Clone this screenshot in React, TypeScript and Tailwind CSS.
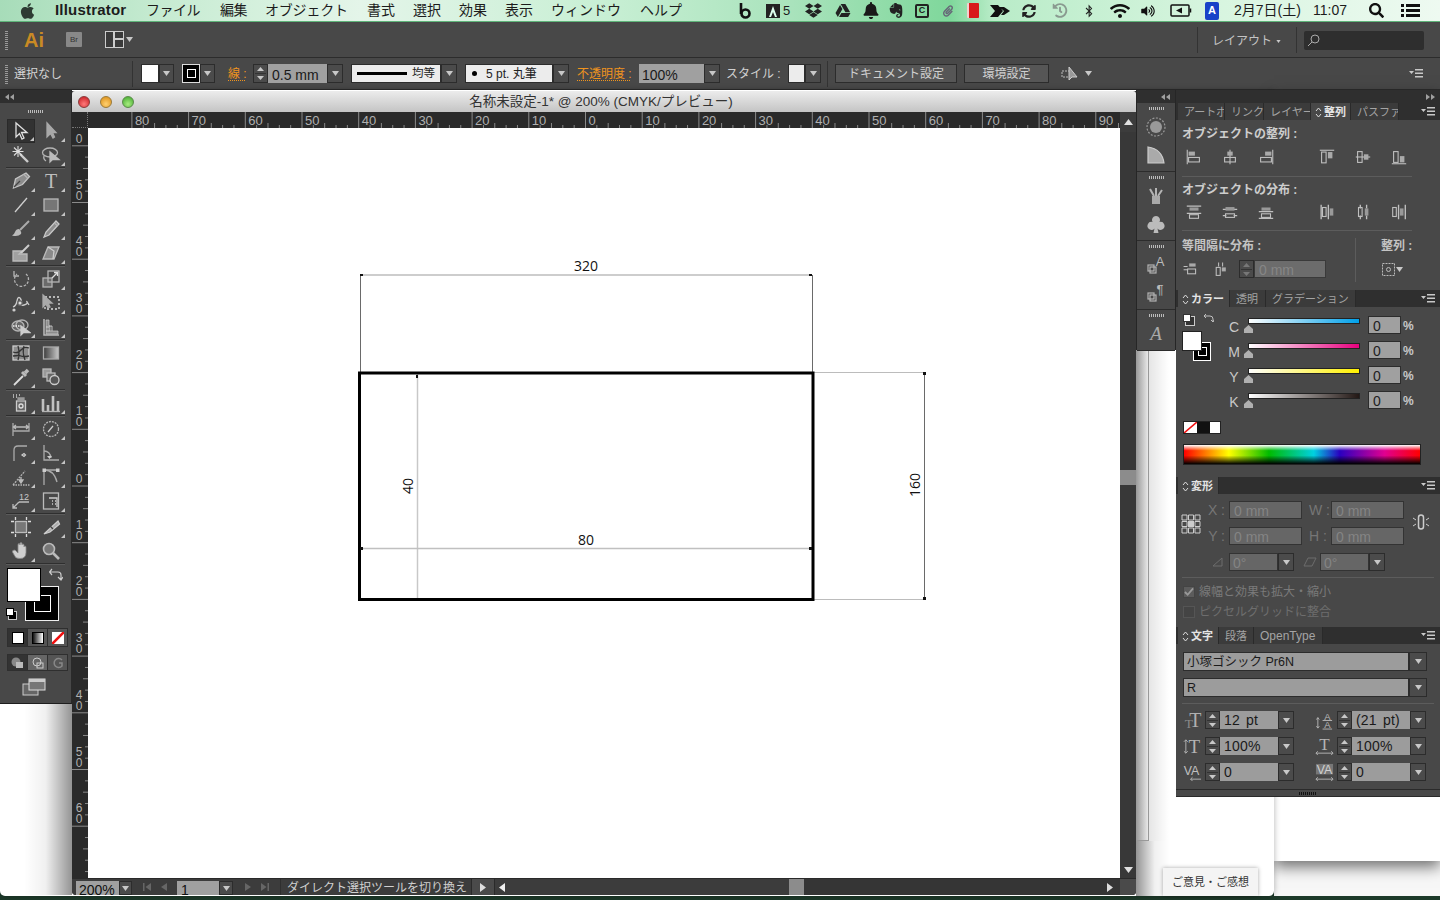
import React from "react";
import { FaApple, FaDropbox, FaGoogleDrive, FaBell, FaEvernote, FaPaperclip, FaSyncAlt, FaBluetoothB, FaWifi, FaVolumeUp, FaSearch, FaHistory } from "react-icons/fa";

const Tri = ({ c = "#c8c8c8", w = 7, h = 5 }: { c?: string; w?: number; h?: number }) => (
  <svg width={w} height={h} viewBox="0 0 7 5" className="shrink-0"><path d="M0 0h7L3.5 5z" fill={c} /></svg>
);
const Drop = ({ cls = "w-[16px]" }: { cls?: string }) => (
  <div className={`${cls} h-full shrink-0 flex items-center justify-center bg-[#4b4b4b] border border-[#2c2c2c]`}><Tri /></div>
);
const Spin = ({ dim = false }: { dim?: boolean }) => (
  <div className={`w-[15px] h-full shrink-0 flex flex-col items-center justify-center gap-[2px] bg-[#4b4b4b] border border-[#2c2c2c]`}>
    <svg width="7" height="4" viewBox="0 0 7 4"><path d="M0 4h7L3.5 0z" fill={dim ? "#777" : "#c8c8c8"} /></svg>
    <div className="w-[11px] h-px bg-[#333]" />
    <svg width="7" height="4" viewBox="0 0 7 4"><path d="M0 0h7L3.5 4z" fill={dim ? "#777" : "#c8c8c8"} /></svg>
  </div>
);
const Ico = ({ s = 20, sw = 1.3, c = "#b4b4b4", children }: { s?: number; sw?: number; c?: string; children: React.ReactNode }) => (
  <svg width={s} height={s} viewBox="0 0 20 20" fill="none" stroke={c} strokeWidth={sw} className="shrink-0">{children}</svg>
);

type ToolDef = { i: React.ReactNode; f?: boolean; sel?: boolean };
const arrow = "M5 2v14l3.5-3.5 2.5 5.5 2-1-2.500-5.500H16z";
const tools: ToolDef[][][] = [
  [
    [{ sel: true, i: <path d={arrow} stroke="#e0e0e0" /> }, { f: true, i: <path d="M6 2v14l3.500-3.500L12 17l1.500-1-2-4.500H15z" fill="#a8a8a8" stroke="#a8a8a8" /> }],
    [{ i: <><path d="M9 9l8 8" strokeWidth="2.400" stroke="#ccc" /><path d="M7 1v11M1.500 6.500h11M3 2.500l8 8M11 2.500l-8 8" strokeWidth="1.100" stroke="#ddd" /></> }, { f: true, i: <><ellipse cx="9" cy="7.500" rx="7.500" ry="4.500" /><path d="M3 11q-1 3 2 5" /><path d="M9 7v10l2.500-2.500H18z" fill="#bbb" stroke="#bbb" /></> }],
  ],
  [
    [{ f: true, i: <><path d="M15 2l3.500 3.500-7 8L2.500 17l2-9z" fill="#8d8d8d" stroke="#c4c4c4" /><path d="M3 16l6-6" stroke="#444" /><path d="M12.500 3l4 4" /></> }, { f: true, i: <text x="10" y="17" textAnchor="middle" fontSize="20" fill="#bdbdbd" stroke="none" fontFamily="'Liberation Serif',serif">T</text> }],
    [{ f: true, i: <path d="M4 17L16 3" stroke="#cfcfcf" /> }, { f: true, i: <rect x="3" y="4" width="14" height="12" fill="#767676" stroke="#b8b8b8" /> }],
    [{ f: true, i: <><path d="M18 2l-9 9" strokeWidth="2" stroke="#aaa" /><path d="M8 10q-3 0-4 3-1 3-3 3.500 6 1.500 9-1.500 1-2-2-5z" fill="#bbb" stroke="none" /></> }, { f: true, i: <><path d="M15 2l3 3-10 11-5 2 2-5z" fill="#8d8d8d" stroke="#c8c8c8" /><path d="M13.500 4l3 3" /></> }],
    [{ f: true, i: <><path d="M2 8h9l-3 3h8v7H2z" fill="#a0a0a0" stroke="#bbb" /><path d="M18 2l-8 8" strokeWidth="2" stroke="#ccc" /></> }, { f: true, i: <><path d="M7 4h11l-5 12H2z" fill="#8a8a8a" stroke="#bbb" /><path d="M7 4l6 4-1 8" stroke="#ccc" /></> }],
  ],
  [
    [{ f: true, i: <><path d="M15 5a7 7 0 1 1-9 0" strokeDasharray="2.500 1.500" /><path d="M3 2v5h5" /></> }, { f: true, i: <><rect x="2" y="9" width="9" height="9" fill="#6b6b6b" /><rect x="7" y="2" width="11" height="11" /><path d="M11 9l5-5M13 3.500h3.500V7" stroke="#ddd" /></> }],
    [{ f: true, i: <><path d="M2 14q3-1 4-6t3-3 1 5 3 2 3-3 2 3" stroke="#ccc" /><circle cx="9" cy="10" r="2.200" fill="#ddd" stroke="#666" /><circle cx="3" cy="17" r="1.600" fill="#ccc" stroke="none" /></> }, { f: true, i: <><rect x="4" y="4" width="14" height="12" strokeDasharray="2 2" stroke="#ddd" /><path d="M2 2v12l3-3 2 4 2-1-2-4h4z" fill="#aaa" stroke="#aaa" /></> }],
    [{ f: true, i: <><ellipse cx="7" cy="9" rx="6" ry="5" fill="#666" /><ellipse cx="11" cy="8" rx="6" ry="5" /><path d="M2 9h8" stroke="#eee" strokeDasharray="1.500 1" /><path d="M10 9v9l2.500-2.500H19z" fill="#ccc" stroke="#ccc" /></> }, { f: true, i: <><path d="M3 2v16h15" stroke="#bbb" strokeWidth="1.500" /><path d="M5 3v14h12v-3H9V9H8V3z" fill="#8c8c8c" stroke="#ccc" strokeWidth=".7" /><path d="M8 9h3v5M5 10h3M5 14h4" stroke="#ddd" strokeWidth=".8" /></> }],
  ],
  [
    [{ i: <><rect x="2" y="3" width="16" height="14" fill="#8d8d8d" stroke="#ccc" /><path d="M2 9q5 2 8-2t8-2M7 3q2 7 0 14M2 13q6-1 8 0t8 0M13 3q-2 6 1 14" stroke="#333" /></> }, { i: <><defs><linearGradient id="grad1"><stop offset="0" stopColor="#3c3c3c" /><stop offset="1" stopColor="#c8c8c8" /></linearGradient></defs><rect x="2.500" y="4" width="15" height="12" fill="url(#grad1)" stroke="#aaa" /></> }],
    [{ f: true, i: <><path d="M3 18l9-9" strokeWidth="1.800" stroke="#ddd" /><path d="M11 5l4 4" strokeWidth="3" stroke="#bbb" /><path d="M14 6l3-3" strokeWidth="3.500" stroke="#bbb" /></> }, { i: <><rect x="2" y="2" width="8" height="8" fill="#999" stroke="#bbb" /><rect x="6" y="6" width="8" height="8" fill="#666" stroke="#bbb" /><circle cx="13.500" cy="13" r="4.500" fill="#555" stroke="#ccc" /></> }],
  ],
  [
    [{ f: true, i: <><rect x="5.500" y="8" width="9" height="10" fill="#666" stroke="#ccc" /><circle cx="10" cy="13" r="2" stroke="#ddd" /><path d="M7 5h6v3H7z" fill="#999" stroke="#999" /><path d="M2 2h1M5 2h1M8 2h1M2 4h1M5 4h1" stroke="#ccc" /></> }, { f: true, i: <><path d="M2 18V6M7 18v-6M12 18V3M17 18V8" stroke="#c0c0c0" strokeWidth="2.600" /><path d="M1 18.500h18" /></> }],
  ],
  [
    [{ f: true, i: <><path d="M2 4v8h16V4M2 17v-5" stroke="#aaa" /><path d="M2 8h16M5 6L2.500 8 5 10M15 6l2.500 2L15 10" stroke="#bbb" /></> }, { f: true, i: <><circle cx="10" cy="10" r="7.500" strokeDasharray="2 1" /><path d="M7 13l5-6" stroke="#ccc" /></> }],
    [{ f: true, i: <><path d="M3 18V7q0-4 4-4h9" stroke="#aaa" /><path d="M11 12l2-1.500 1.500 1.500-1.500 1.500z" stroke="#ccc" /></> }, { f: true, i: <><path d="M3 2v15h15" stroke="#aaa" /><path d="M3 8q6 0 7 7" stroke="#aaa" /><path d="M6 13l5 0-2.500 3z" fill="#ccc" stroke="none" /></> }],
    [{ f: true, i: <><path d="M2 18L14 4" strokeDasharray="2 1" /><path d="M2 18h17" strokeDasharray="1.500 1" /><path d="M10 10v5M8 13h4l-2 3z" fill="#bbb" stroke="#bbb" /></> }, { f: true, i: <><path d="M3 18V3h14" stroke="#aaa" /><path d="M3 3q10 0 13 12" stroke="#aaa" /><rect x="1.500" y="1.500" width="3.500" height="3.500" fill="#ccc" stroke="none" /><rect x="15" y="1.500" width="3.500" height="3.500" fill="#ccc" stroke="none" /></> }],
    [{ f: true, i: <><text x="13" y="9" textAnchor="middle" fontSize="9" fill="#c8c8c8" stroke="none" fontFamily="'Liberation Sans',sans-serif">12</text><path d="M8 11h10M8 11L2 17M2 13v4h4" stroke="#bbb" /></> }, { f: true, i: <><rect x="2.500" y="2" width="15" height="16" stroke="#bbb" /><path d="M8 7h8v9M11 10h1M14 10h1M11 13h1M14 13h1" stroke="#ccc" /></> }],
  ],
  [
    [{ i: <><rect x="4.500" y="4.500" width="11" height="11" fill="#777" stroke="#bbb" /><path d="M0 4.500h3M17 4.500h3M0 15.500h3M17 15.500h3M4.500 0v3M15.500 0v3M4.500 17v3M15.500 17v3" stroke="#ddd" /></> }, { f: true, i: <><path d="M3 17L17 4l1.500 3L9 15z" fill="#aaa" stroke="#ccc" /><path d="M9 9l3 3" stroke="#444" /></> }],
    [{ f: true, i: <path d="M4 9l3 3V4q0-1.500 1-1.500T9 4V3q0-1.500 1-1.500t1 1.500v1q0-1 1-1t1 1.500v1.500q0-1 1-1t1 1.500v5q0 6-6 6-4 0-5-2L1.500 11q-.5-2 2.500-2z" fill="#cfcfcf" stroke="#888" strokeWidth=".8" /> }, { i: <><circle cx="8" cy="8" r="5.500" fill="#777" stroke="#bbb" strokeWidth="1.600" /><path d="M12 12l6 6" strokeWidth="2.600" stroke="#bbb" /></> }],
  ],
];

const ToolBox = () => (
  <div className="absolute left-0 top-0 w-[72px] h-[614px] flex flex-col bg-[#484848] border-b border-[#1e1e1e] border-r border-r-[#2a2a2a]">
    <div className="h-[13px] shrink-0 bg-[#2f2f2f] flex items-center pl-[5px] text-[#aaa]">
      <svg width="9" height="6" viewBox="0 0 9 6"><path d="M4 0L0 3l4 3zM9 0L5 3l4 3z" fill="#a0a0a0" /></svg>
    </div>
    <div className="h-[16px] shrink-0 flex items-center justify-center"><div className="w-[15px] h-[3px] bg-[repeating-linear-gradient(90deg,#bbb_0_1px,transparent_1px_2px)]" /></div>
    {tools.map((g, gi) => (
      <div key={gi} className="flex flex-col">
        {gi > 0 && <div className="mx-[6px] h-[2px] border-t border-[#2f2f2f] border-b-[#5a5a5a] border-b" />}
        {g.map((row, ri) => (
          <div key={ri} className="h-6 flex">
            {row.map((t, ti) => (
              <div key={ti} className={`relative flex items-center justify-center ${ti === 0 ? "ml-[7px] w-[28px]" : "ml-[2px] w-[28px]"} ${t.sel ? "bg-[#323232] border border-[#2a2a2a]" : ""}`}>
                <Ico>{t.i}</Ico>
                {(t.f || t.sel) && <svg width="4" height="4" viewBox="0 0 4 4" className="absolute right-0 bottom-[1px]"><path d="M4 0v4H0z" fill="#c4c4c4" /></svg>}
              </div>
            ))}
          </div>
        ))}
      </div>
    ))}
    <div className="mx-[6px] h-[2px] border-t border-[#2f2f2f] border-b-[#5a5a5a] border-b" />
    <div className="relative h-[54px] shrink-0">
      <div className="absolute left-[25px] top-[21px] w-[34px] h-[35px] bg-black border border-[#eee] flex items-center justify-center"><div className="w-[17px] h-[17px] border border-white" /></div>
      <div className="absolute left-[7px] top-[3px] w-[34px] h-[34px] bg-white border border-black" />
      <svg width="14" height="13" viewBox="0 0 14 13" className="absolute left-[49px] top-[3px]" fill="none" stroke="#ccc" strokeWidth="1.200"><path d="M1 4h8q3 0 3 3v5M3 1L0.500 4 3 7M9 9l3 3 2-3" /></svg>
      <div className="absolute left-[8px] top-[46px] w-[9px] h-[9px] bg-black border border-[#ccc]" />
      <div className="absolute left-[6px] top-[43px] w-[8px] h-[8px] bg-white border border-black" />
    </div>
    <div className="ml-[7px] mt-[9px] w-[61px] h-[19px] flex bg-[#2f2f2f] p-px gap-px">
      <div className="flex-1 bg-[#333] flex items-center justify-center"><div className="w-[12px] h-[12px] bg-white border border-black" /></div>
      <div className="flex-1 bg-[#555] flex items-center justify-center"><div className="w-[12px] h-[12px] bg-[linear-gradient(90deg,#111,#fff)] border border-black" /></div>
      <div className="flex-1 bg-[#555] flex items-center justify-center"><svg width="12" height="12" viewBox="0 0 12 12"><rect width="12" height="12" fill="#fff" /><path d="M0 12L12 0" stroke="#f01010" strokeWidth="2.600" /></svg></div>
    </div>
    <div className="ml-[7px] mt-[7px] w-[61px] h-[17px] flex bg-[#2f2f2f] p-px gap-px">
      <div className="flex-1 bg-[#333] flex items-center justify-center"><svg width="14" height="12" viewBox="0 0 14 12"><circle cx="5" cy="5" r="4.500" fill="#888" /><rect x="5" y="5" width="7" height="6" fill="#bbb" /></svg></div>
      <div className="flex-1 bg-[#666] flex items-center justify-center"><svg width="14" height="12" viewBox="0 0 14 12" fill="none" stroke="#ccc"><circle cx="6" cy="5" r="4" /><rect x="6" y="6" width="6" height="5" /></svg></div>
      <div className="flex-1 bg-[#555] flex items-center justify-center"><svg width="12" height="12" viewBox="0 0 12 12" fill="none" stroke="#888" strokeWidth="1.500"><path d="M10 3a4.500 4.500 0 1 0 0 6V6H7" /></svg></div>
    </div>
    <div className="mt-[7px] flex justify-center pr-[4px]">
      <svg width="24" height="18" viewBox="0 0 24 18"><rect x="1" y="6" width="15" height="11" fill="#666" stroke="#ccc" /><rect x="7" y="1" width="16" height="11" fill="#777" stroke="#ddd" /><rect x="7" y="1" width="16" height="3" fill="#ccc" /></svg>
    </div>
  </div>
);

const hMajors = Array.from({ length: 18 }, (_, i) => i - 8);
const HRuler = () => (
  <svg width="1032" height="16" className="block bg-[#2a2a2a]">
    {hMajors.map((k) => {
      const x = 497.5 + 56.7 * k;
      return (
        <g key={k}>
          <path d={`M${x} 0V16`} stroke="#8a8a8a" />
          <text x={x + 3} y="13" fontSize="13" fill="#b0b0b0" fontFamily="'Liberation Sans',sans-serif">{Math.abs(k) * 10}</text>
          {[1, 2, 3, 4].map((m) => <path key={m} d={`M${x + (56.7 * m) / 5} ${m === 2 ? 11 : 13}V16`} stroke="#888" />)}
        </g>
      );
    })}
  </svg>
);
const vMajors = Array.from({ length: 13 }, (_, i) => i - 6);
const VRuler = () => (
  <svg width="16" height="750" className="block bg-[#2a2a2a] shrink-0">
    {vMajors.map((k) => {
      const y = 358 + 56.7 * k;
      const v = String(Math.abs(k) * 10);
      return (
        <g key={k}>
          <path d={`M0 ${y}H16`} stroke="#8a8a8a" />
          <text x="7" y={y - 3} textAnchor="middle" fontSize="12" fill="#b0b0b0" fontFamily="'Liberation Sans',sans-serif">0</text>
          {k !== 0 && k !== -6 && <text x="7" y={y - 14} textAnchor="middle" fontSize="12" fill="#b0b0b0" fontFamily="'Liberation Sans',sans-serif">{v[0]}</text>}
          {[1, 2, 3, 4].map((m) => <path key={m} d={`M${m === 2 ? 11 : 13} ${y + (56.7 * m) / 5}H16`} stroke="#888" />)}
        </g>
      );
    })}
  </svg>
);

const Artwork = () => (
  <svg width="1032" height="750" className="block bg-white">
    <g transform="translate(-88 -128)" fontFamily="'Open Sans',sans-serif" fontSize="14" fill="#111">
      <g stroke="#bcbcbc" fill="none" strokeWidth="1.500">
        <path d="M360 275H812" />
        <path d="M417.500 373V599" stroke="#c8c8c8" />
        <path d="M360 548.500H812" stroke="#c0c0c0" />
        <path d="M813 372.500H924M813 599.500H924" strokeWidth="1" />
      </g>
      <path d="M360.500 275V372M812.500 275V372M924.500 373V599" stroke="#6a6a6a" fill="none" />
      <rect x="359.500" y="373" width="453.500" height="226.500" fill="none" stroke="#000" strokeWidth="3" />
      <path d="M360 274h3v2h-3zM809 274h3v2h-3zM923 372h3v3h-3zM923 597h3v3h-3zM360 547h3v3h-3zM809 547h3v3h-3zM416 375h2v3h-2z" fill="#111" />
      <text x="586" y="271" textAnchor="middle">320</text>
      <text x="586" y="545" textAnchor="middle">80</text>
      <text transform="translate(413 486) rotate(-90)" textAnchor="middle">40</text>
      <text transform="translate(920 485) rotate(-90)" textAnchor="middle">160</text>
    </g>
  </svg>
);

const DocWindow = () => (
  <div className="absolute left-[72px] top-[1px] w-[1064px] h-[804px] flex flex-col rounded-b-[4px] bg-[#2f2f2f] overflow-hidden">
    <div className="h-[21px] shrink-0 relative flex items-center justify-center pt-[1px] pr-[6px] bg-[linear-gradient(#ececec,#c4c4c4)] rounded-t-[3px]">
      <div className="absolute left-[6px] top-[5px] flex gap-[10px]">
        <div className="w-3 h-3 rounded-full bg-[radial-gradient(circle_at_50%_70%,#ff7b7b,#c4161c)] border border-[#8a3a3a]" />
        <div className="w-3 h-3 rounded-full bg-[radial-gradient(circle_at_50%_70%,#ffd070,#d98a10)] border border-[#9a7a3a]" />
        <div className="w-3 h-3 rounded-full bg-[radial-gradient(circle_at_50%_70%,#a8ec80,#3da62a)] border border-[#5a8a4a]" />
      </div>
      <span className="text-[13.500px] text-[#333] whitespace-nowrap">名称未設定-1* @ 200% (CMYK/プレビュー)</span>
    </div>
    <div className="flex-1 min-h-0 flex">
      <div className="w-[16px] shrink-0 flex flex-col">
        <div className="h-[16px] bg-[#2a2a2a] border-r border-b border-dotted border-[#777]" />
        <VRuler />
      </div>
      <div className="w-[1032px] shrink-0 flex flex-col">
        <HRuler />
        <Artwork />
      </div>
      <div className="w-[16px] shrink-0 flex flex-col items-center bg-[#383838]">
        <div className="h-[20px] w-full flex items-center justify-center bg-[#3c3c3c]"><svg width="9" height="6" viewBox="0 0 9 6"><path d="M0 6h9L4.500 0z" fill="#e0e0e0" /></svg></div>
        <div className="h-[338px]" />
        <div className="w-full h-[15px] bg-[#8c8c8c]" />
        <div className="flex-1" />
        <div className="h-[16px] flex items-center"><svg width="9" height="6" viewBox="0 0 9 6"><path d="M0 0h9L4.500 6z" fill="#e0e0e0" /></svg></div>
      </div>
    </div>
    <div className="h-[17px] shrink-0 flex items-stretch bg-[#3c3c3c] border-t border-[#2a2a2a] text-[12px]">
      <div className="ml-[4px] mt-[2px] w-[43px] h-[16px] bg-[#a0a0a0] text-[#111] pl-[3px] leading-[19px] overflow-hidden text-[14px]">200%</div>
      <div className="mt-[2px]"><Drop cls="w-[13px]" /></div>
      <div className="w-[45px] flex items-center justify-center gap-[10px]">
        <svg width="8" height="8" viewBox="0 0 8 8"><path d="M0 0h1.500v8H0zM8 0v8L2.500 4z" fill="#666" /></svg>
        <svg width="6" height="8" viewBox="0 0 6 8"><path d="M6 0v8L0 4z" fill="#666" /></svg>
      </div>
      <div className="mt-[2px] w-[42px] h-[16px] bg-[#a0a0a0] text-[#111] pl-[4px] leading-[19px] overflow-hidden text-[14px]">1</div>
      <div className="mt-[2px]"><Drop cls="w-[14px]" /></div>
      <div className="w-[48px] flex items-center justify-center gap-[10px] border-r border-[#2f2f2f]">
        <svg width="6" height="8" viewBox="0 0 6 8"><path d="M0 0v8l6-4z" fill="#666" /></svg>
        <svg width="8" height="8" viewBox="0 0 8 8"><path d="M8 0H6.500v8H8zM0 0v8l5.500-4z" fill="#666" /></svg>
      </div>
      <div className="w-[190px] pl-[6px] pt-[1px] flex items-center text-[#d0d0d0] whitespace-nowrap">ダイレクト選択ツールを切り換え</div>
      <div className="w-[24px] flex items-center justify-center bg-[#4a4a4a] border-x border-[#2a2a2a]"><svg width="6" height="9" viewBox="0 0 6 9"><path d="M0 0v9l6-4.500z" fill="#ddd" /></svg></div>
      <div className="w-[14px] flex items-center justify-center"><svg width="6" height="9" viewBox="0 0 6 9"><path d="M6 0v9L0 4.500z" fill="#eee" /></svg></div>
      <div className="w-[280px]" />
      <div className="w-[15px] bg-[#8c8c8c]" />
      <div className="flex-1 flex items-center justify-end pr-[7px] bg-[#353535]"><svg width="6" height="9" viewBox="0 0 6 9"><path d="M0 0v9l6-4.500z" fill="#ddd" /></svg></div>
      <div className="w-[16px] bg-[#4a4a4a]" />
    </div>
  </div>
);

const Menu = () => (
  <div className="h-[22px] shrink-0 flex items-center text-[14px] text-[#1c1c1c] bg-[linear-gradient(90deg,#a7dcb9_0%,#c8ecd3_12%,#e4f5e9_25%,#c8efd4_42%,#a9e3bc_55%,#7fd79b_66%,#b9ecc8_69%,#d8f5e0_85%,#eefaf1_100%)] border-b border-[#5fb57a]">
    <div className="w-[739px] shrink-0 flex items-center whitespace-nowrap">
      <FaApple className="ml-[19px] w-[17px] h-[18px] text-[#2d3b33]" />
      <b className="ml-[19px] w-[72px] text-[15px] tracking-[0.200px] font-bold">Illustrator</b>
      <span className="ml-[19px] w-[54px] tracking-[-0.500px]">ファイル</span>
      <span className="ml-[20px] w-[27px] tracking-[-0.500px]">編集</span>
      <span className="ml-[18px] w-[83px] tracking-[-0.200px]">オブジェクト</span>
      <span className="ml-[19px] w-[28px]">書式</span>
      <span className="ml-[18px] w-[28px]">選択</span>
      <span className="ml-[18px] w-[28px]">効果</span>
      <span className="ml-[18px] w-[28px]">表示</span>
      <span className="ml-[18px] w-[71px]">ウィンドウ</span>
      <span className="ml-[18px] w-[41px]">ヘルプ</span>
    </div>
    <div className="flex items-center shrink-0 whitespace-nowrap">
      <svg width="12" height="16" viewBox="0 0 12 16" fill="none" stroke="#111" strokeWidth="2.600"><path d="M2 0v11" /><circle cx="6.500" cy="10.500" r="4" /></svg>
      <svg width="14" height="14" viewBox="0 0 14 14" className="ml-[15px]"><path d="M0 0h14v14H0z" fill="#222" /><path d="M7 2L3 13h2l2-5 2 5h2z" fill="#dfe" /></svg>
      <span className="ml-[3px] w-[7px] text-[13px] leading-none">5</span>
      <FaDropbox className="ml-[15px] w-[17px] h-[17px] text-[#222]" />
      <FaGoogleDrive className="ml-[13px] w-[16px] h-[15px] text-[#222]" />
      <FaBell className="ml-[10px] w-[20px] h-[17px] text-[#1a1a1a]" />
      <FaEvernote className="ml-[8px] w-[14px] h-[17px] text-[#222]" />
      <div className="ml-[12px] w-[14px] h-[14px] border-2 border-[#222] rounded-[2px] flex items-center justify-center text-[9px] font-bold leading-none">C</div>
      <FaPaperclip className="ml-[14px] w-[10px] h-[16px] text-[#667]" />
      <div className="ml-[14px] w-[12px] h-[15px] bg-[#d81a1a] rounded-[1px] border-l-2 border-[#f5d0d0]" />
      <svg width="20" height="12" viewBox="0 0 20 12" className="ml-[11px]"><path d="M0 0h8l5 6-5 6H0l5-6zM9 2h5l6 4-6 4H11l3-4z" fill="#111" /></svg>
      <FaSyncAlt className="ml-[12px] w-[14px] h-[14px] text-[#222]" />
      <FaHistory className="ml-[16px] w-[16px] h-[15px] text-[#8a9a90]" />
      <FaBluetoothB className="ml-[17px] w-[8px] h-[14px] text-[#222]" />
      <FaWifi className="ml-[16px] w-[22px] h-[16px] text-[#111]" />
      <FaVolumeUp className="ml-[10px] w-[14px] h-[12px] text-[#111]" />
      <svg width="22" height="13" viewBox="0 0 22 13" className="ml-[15px]" fill="none" stroke="#111" strokeWidth="1.500"><rect x="1" y="1" width="18" height="11" rx="1" /><path d="M20.500 4.500v4" /><path d="M12 3.500v6L6 6.500z" fill="#111" stroke="none" /></svg>
      <div className="ml-[13px] w-[14px] h-[18px] bg-[#1842c8] rounded-[2px] text-white text-[11px] font-bold flex items-center justify-center leading-none">A</div>
      <span className="ml-[15px] w-[68px]">2月7日(土)</span>
      <span className="ml-[11px] w-[38px]">11:07</span>
      <FaSearch className="ml-[18px] w-[15px] h-[15px] text-[#111]" />
      <svg width="19" height="13" viewBox="0 0 19 13" className="ml-[17px]" fill="#111"><path d="M0 0h3v3H0zM5 0h14v3H5zM0 5h3v3H0zM5 5h14v3H5zM0 10h3v3H0zM5 10h14v3H5z" /></svg>
    </div>
  </div>
);

const AppBar = () => (
  <div className="h-[36px] shrink-0 flex items-center bg-[#484848] border-b border-[#2c2c2c]">
    <div className="ml-[5px] w-[3px] h-[20px] bg-[repeating-linear-gradient(0deg,#999_0_1px,transparent_1px_2px)]" />
    <b className="ml-[16px] w-[24px] text-[20px] text-[#c98a24] leading-none">Ai</b>
    <div className="ml-[18px] w-[16px] h-[15px] bg-[#888] rounded-[1px] text-[8px] text-[#333] flex items-center justify-center leading-none">Br</div>
    <svg width="20" height="17" viewBox="0 0 20 17" className="ml-[23px]" fill="#3a3a3a" stroke="#ccc"><rect x=".5" y=".5" width="8" height="16" /><rect x="9.500" y=".5" width="9" height="7" /><rect x="9.500" y="8.500" width="9" height="8" /></svg>
    <div className="ml-[1px]"><Tri /></div>
    <div className="flex-1" />
    <div className="w-px h-[26px] bg-[#333]" />
    <span className="ml-[14px] w-[54px] pt-[3px] text-[12px] text-[#c4c4c4] whitespace-nowrap">レイアウト</span>
    <div className="ml-[10px] pt-[3px]"><Tri w={5} h={3} /></div>
    <div className="ml-[15px] w-px h-[26px] bg-[#333]" />
    <div className="ml-[7px] mr-[16px] mt-[2px] w-[120px] h-[19px] bg-[#2e2e2e] rounded-[2px] flex items-center pl-[3px]">
      <svg width="13" height="13" viewBox="0 0 13 13" fill="none" stroke="#aaa"><circle cx="8" cy="5" r="4" /><path d="M5 8l-4 4" /></svg>
    </div>
  </div>
);

const dotted = "underline decoration-dotted decoration-[#f0941e] underline-offset-2";
const CtrlBar = () => (
  <div className="h-[32px] shrink-0 flex items-center bg-[#484848] border-b border-[#2c2c2c] text-[12px] text-[#d0d0d0] whitespace-nowrap">
    <div className="ml-[5px] w-[3px] h-[20px] bg-[repeating-linear-gradient(0deg,#999_0_1px,transparent_1px_2px)]" />
    <span className="ml-[6px] w-[118px] text-[#d4d4d4]">選択なし</span>
    <div className="w-px h-[26px] bg-[#333]" />
    <div className="ml-[8px] flex h-[19px]"><div className="w-[18px] bg-white border border-[#2c2c2c]" /><Drop cls="w-[15px]" /></div>
    <div className="ml-[8px] flex h-[19px]"><div className="w-[18px] bg-black border border-[#ddd] flex items-center justify-center"><div className="w-[9px] h-[9px] border border-white" /></div><Drop cls="w-[15px]" /></div>
    <span className={`ml-[13px] w-[25px] pt-[1px] text-[#f0941e] ${dotted}`}>線 :</span>
    <div className="flex h-[19px]"><Spin /><div className="w-[59px] bg-[#a0a0a0] text-[#1a1a1a] text-[14px] leading-[22px] pl-[4px]">0.5 mm</div><Drop /></div>
    <div className="ml-[8px] flex h-[19px]"><div className="w-[90px] bg-[#ececec] border border-[#2c2c2c] flex items-center pl-[5px] text-[#222]"><div className="w-[50px] h-[2.500px] bg-black" /><span className="ml-[5px] text-[11.500px]">均等</span></div><Drop /></div>
    <div className="ml-[8px] flex h-[19px]"><div className="w-[88px] bg-[#ececec] border border-[#2c2c2c] flex items-center pl-[6px] text-[#222]"><div className="w-[5px] h-[5px] rounded-full bg-black" /><span className="ml-[9px]">5 pt. 丸筆</span></div><Drop /></div>
    <span className={`ml-[8px] w-[62px] pt-[1px] text-[#f0941e] ${dotted}`}>不透明度 :</span>
    <div className="flex h-[19px]"><div className="w-[65px] bg-[#a0a0a0] text-[#1a1a1a] text-[14px] leading-[22px] pl-[3px]">100%</div><Drop /></div>
    <span className="ml-[6px] w-[62px] pt-[1px]">スタイル :</span>
    <div className="flex h-[19px]"><div className="w-[17px] bg-[#ececec] border border-[#2c2c2c]" /><Drop /></div>
    <div className="ml-[6px] w-px h-[26px] bg-[#333]" />
    <div className="ml-[7px] w-[122px] h-[19px] bg-[#565656] border border-[#2c2c2c] flex items-center justify-center">ドキュメント設定</div>
    <div className="ml-[7px] w-[85px] h-[19px] bg-[#565656] border border-[#2c2c2c] flex items-center justify-center">環境設定</div>
    <svg width="17" height="14" viewBox="0 0 17 14" className="ml-[12px]" fill="none" stroke="#bbb"><path d="M1 4h9v6H1z" strokeDasharray="2 1" /><path d="M8 0v13l3-3h5z" fill="#999" stroke="#ccc" /></svg>
    <div className="ml-[7px]"><Tri /></div>
    <div className="flex-1" />
    <MenuIcon cls="mr-[17px]" />
  </div>
);

function MenuIcon({ cls = "" }: { cls?: string }) {
  return <svg width="14" height="9" viewBox="0 0 14 9" className={cls} fill="#c8c8c8"><path d="M0 2h5L2.500 5zM6 0h8v1.500H6zM6 3.500h8V5H6zM6 7h8v1.500H6z" /></svg>;
}

const Updown = () => <svg width="7" height="11" viewBox="0 0 7 11" className="shrink-0" fill="none" stroke="#ddd"><path d="M1 4l2.500-3L6 4M1 7l2.500 3L6 7" /></svg>;

type Tab = { label: string; w: string; active?: boolean; caret?: boolean; big?: boolean };
const TabBar = ({ tabs }: { tabs: Tab[] }) => (
  <div className="h-[17px] shrink-0 flex items-stretch bg-[#2f2f2f] pl-[2px] text-[11px] whitespace-nowrap">
    {tabs.map((t) => (
      <div key={t.label} className={`${t.w} ${t.big ? "text-[12px]" : ""} overflow-hidden flex items-center gap-[2px] pt-[1px] border-r border-[#2a2a2a] ${t.active ? "bg-[#484848] text-[#e4e4e4] font-bold pl-[4px]" : "bg-[#3b3b3b] text-[#a4a4a4] pl-[6px]"}`}>
        {t.caret && <Updown />}<span>{t.label}</span>
      </div>
    ))}
    <div className="flex-1 flex items-center justify-end pr-[5px]"><MenuIcon /></div>
  </div>
);

const IconCell = ({ d, w = "w-9" }: { d: React.ReactNode; w?: string }) => (
  <div className={`${w} shrink-0 flex items-center justify-center`}><Ico s={18} sw={1.200} c="#c0c0c0">{d}</Ico></div>
);
const alignIcons: React.ReactNode[] = [
  <><path d="M2.500 2v16" /><rect x="4" y="4" width="7" height="4.500" fill="#aaa" stroke="none" /><rect x="4" y="10.500" width="12" height="5" /></>,
  <><path d="M10 2v16" /><rect x="7" y="4" width="6" height="4.500" fill="#aaa" stroke="none" /><rect x="4" y="10.500" width="12" height="5" /></>,
  <><path d="M17.500 2v16" /><rect x="9" y="4" width="7" height="4.500" fill="#aaa" stroke="none" /><rect x="4" y="10.500" width="12" height="5" /></>,
  <><path d="M2 2.500h16" /><rect x="4" y="4.500" width="5" height="12" /><rect x="11" y="4.500" width="5" height="7" fill="#aaa" stroke="none" /></>,
  <><path d="M2 10h16" /><rect x="4" y="4" width="5" height="12" /><rect x="11" y="7" width="5" height="6" fill="#aaa" stroke="none" /></>,
  <><path d="M2 17.500h16" /><rect x="4" y="4" width="5" height="12" /><rect x="11" y="9" width="5" height="7" fill="#aaa" stroke="none" /></>,
];
const distIcons: React.ReactNode[] = [
  <><path d="M2 3.500h16M2 11.500h16" strokeWidth="1.500" /><rect x="5" y="5" width="10" height="3.500" fill="#999" stroke="none" /><rect x="5" y="13" width="10" height="4" /></>,
  <><path d="M2 7h4M14 7h4M2 14h4M14 14h4" strokeWidth="1.500" /><rect x="5" y="4.500" width="10" height="4" fill="#999" stroke="none" /><rect x="5" y="12" width="10" height="4" /></>,
  <><path d="M2 9.500h16M2 17h16" strokeWidth="1.500" /><rect x="5" y="5" width="10" height="3.500" fill="#999" stroke="none" /><rect x="5" y="12" width="10" height="4" /></>,
  <><path d="M3.500 2v16M11.500 2v16" strokeWidth="1.500" /><rect x="5" y="5" width="4" height="10" /><rect x="13" y="6" width="4" height="8" fill="#999" stroke="none" /></>,
  <><path d="M7 2v4M7 14v4M14 2v4M14 14v4" strokeWidth="1.500" /><rect x="5" y="5" width="4" height="10" /><rect x="12" y="6" width="4" height="8" fill="#999" stroke="none" /></>,
  <><path d="M9.500 2v16M17 2v16" strokeWidth="1.500" /><rect x="3" y="5" width="4" height="10" /><rect x="11" y="6" width="4" height="8" fill="#999" stroke="none" /></>,
];

const AlignPanel = () => (
  <div className="h-[187px] shrink-0 flex flex-col">
    <TabBar tabs={[{ label: "アートボード", w: "w-[47px]" }, { label: "リンク", w: "w-[39px]" }, { label: "レイヤー", w: "w-[47px]" }, { label: "整列", w: "w-[40px]", active: true, caret: true }, { label: "パスファインダー", w: "w-[48px]" }]} />
    <div className="flex-1 bg-[#484848] pl-[6px] text-[12px] font-bold text-[#cdcdcd] whitespace-nowrap">
      <div className="h-[27px] flex items-center">オブジェクトの整列 :</div>
      <div className="h-[22px] -mt-[1px] flex -ml-[6px]">
        <div className="flex"><IconCell d={alignIcons[0]} /><IconCell d={alignIcons[1]} /><IconCell d={alignIcons[2]} /></div>
        <div className="flex ml-[25px]"><IconCell d={alignIcons[3]} /><IconCell d={alignIcons[4]} /><IconCell d={alignIcons[5]} /></div>
      </div>
      <div className="mt-[8px] w-[230px] h-px bg-[#5c5c5c]" />
      <div className="h-[23px] mt-[1px] flex items-center">オブジェクトの分布 :</div>
      <div className="h-[22px] flex -ml-[6px]">
        <div className="flex"><IconCell d={distIcons[0]} /><IconCell d={distIcons[1]} /><IconCell d={distIcons[2]} /></div>
        <div className="flex ml-[25px]"><IconCell d={distIcons[3]} /><IconCell d={distIcons[4]} /><IconCell d={distIcons[5]} /></div>
      </div>
      <div className="mt-[7px] w-[230px] h-px bg-[#5c5c5c]" />
      <div className="flex mt-[7px]">
        <div className="w-[173px]">
          <div className="h-[16px] flex items-center text-[#c4c4c4]">等間隔に分布 :</div>
          <div className="flex items-center h-[18px] mt-[6px]">
            <Ico s={16} c="#c0c0c0"><path d="M2 7h5M2 11h5" /><rect x="9" y="3" width="8" height="4" fill="#aaa" stroke="none" /><rect x="7" y="10" width="10" height="6" /></Ico>
            <div className="ml-[15px]"><Ico s={16} c="#c0c0c0"><path d="M7 2v5M12 2v5" /><rect x="4" y="8" width="5" height="10" /><rect x="11" y="8" width="5" height="5" fill="#aaa" stroke="none" /></Ico></div>
            <div className="ml-[10px] flex h-[18px]"><Spin dim /><div className="w-[72px] bg-[#6c6c6c] border border-[#3a3a3a] text-[#868686] font-normal text-[14px] leading-[18px] pl-[4px]">0 mm</div></div>
          </div>
        </div>
        <div className="w-px h-[44px] bg-[#5c5c5c]" />
        <div className="pl-[25px]">
          <div className="h-[16px] flex items-center text-[#c4c4c4]">整列 :</div>
          <div className="flex items-center h-[18px] mt-[6px] ml-[1px] gap-[1px]">
            <svg width="13" height="13" viewBox="0 0 13 13" fill="none" stroke="#bbb"><rect x=".5" y=".5" width="12" height="12" strokeDasharray="2 1" /><circle cx="6.500" cy="6.500" r="2" /></svg>
            <Tri />
          </div>
        </div>
      </div>
    </div>
  </div>
);

const sliders = [
  { l: "C", g: "bg-[linear-gradient(90deg,#fff,#00a0e9)]" },
  { l: "M", g: "bg-[linear-gradient(90deg,#fff,#e6007e)]" },
  { l: "Y", g: "bg-[linear-gradient(90deg,#fff,#fff000)]" },
  { l: "K", g: "bg-[linear-gradient(90deg,#fff,#231815)]" },
];
const ColorPanel = () => (
  <div className="h-[187px] shrink-0 flex flex-col">
    <TabBar tabs={[{ label: "カラー", w: "w-[52px]", active: true, caret: true }, { label: "透明", w: "w-[36px]" }, { label: "グラデーション", w: "w-[90px]" }]} />
    <div className="flex-1 bg-[#484848] relative flex flex-col">
      <div className="absolute left-[9px] top-[9px] w-[10px] h-[10px] bg-[#333] border border-[#ccc]" />
      <div className="absolute left-[7px] top-[7px] w-[8px] h-[8px] bg-white border border-[#333]" />
      <svg width="11" height="10" viewBox="0 0 11 10" className="absolute left-[27px] top-[6px]" fill="none" stroke="#c0c0c0"><path d="M1 3h6q3 0 3 3v3M3 1L1 3l2 2M8 7l2 2 1-2" /></svg>
      <div className="absolute left-[17px] top-[35px] w-[18px] h-[19px] bg-black border border-white flex items-center justify-center"><div className="w-[9px] h-[9px] border border-white" /></div>
      <div className="absolute left-[6px] top-[24px] w-[20px] h-[20px] bg-white border border-[#222]" />
      <div className="pt-[10px] pl-[50px]">
        {sliders.map((s) => (
          <div key={s.l} className="h-[25px] flex items-start">
            <span className="w-[16px] pt-[1px] text-[14px] text-[#c8c8c8] leading-[18px] text-center">{s.l}</span>
            <div className="relative w-[112px] mt-[1px] ml-[6px]">
              <div className={`h-[6px] ${s.g} border border-[#222]`} />
              <svg width="9" height="8" viewBox="0 0 9 8" className="absolute -left-[4px] top-[7px]"><path d="M4.500 0L9 4v4H0V4z" fill="#b0b0b0" /></svg>
            </div>
            <div className="ml-[8px] -mt-[1px] w-[33px] h-[18px] bg-[#a0a0a0] border border-[#2c2c2c] text-[14px] text-[#222] leading-[18px] pl-[4px]">0</div>
            <span className="ml-[2px] text-[12px] font-bold text-[#c8c8c8] leading-[18px]">%</span>
          </div>
        ))}
      </div>
      <div className="ml-[7px] mt-[4px] flex w-[38px] h-[13px] border border-[#222] bg-white">
        <svg width="13" height="11" viewBox="0 0 13 11"><path d="M0 11L13 0" stroke="#f01010" strokeWidth="1.600" /></svg>
        <div className="w-[13px] bg-[#111]" />
        <div className="flex-1 bg-white" />
      </div>
      <div className="ml-[7px] mt-[10px] w-[238px] h-[21px] border border-[#222] bg-[linear-gradient(180deg,#fff_0%,transparent_30%,transparent_55%,#000_100%),linear-gradient(90deg,#f00_0%,#ff0_19%,#0b0_36%,#00d0e0_55%,#2a00c0_66%,#e00090_85%,#f00_100%)]" />
    </div>
  </div>
);

const TField = ({ l }: { l: string }) => (
  <div className="flex items-center h-[18px]">
    <span className="w-[22px] text-[14px] text-[#767676] text-right pr-[4px] leading-none whitespace-nowrap">{l}</span>
    <div className="w-[73px] h-[18px] bg-[#666] border border-[#333] text-[14px] text-[#848484] leading-[18px] pl-[4px]">0 mm</div>
  </div>
);
const TransformPanel = () => (
  <div className="h-[150px] shrink-0 flex flex-col">
    <TabBar tabs={[{ label: "変形", w: "w-[41px]", active: true, caret: true }]} />
    <div className="flex-1 bg-[#484848] flex flex-col">
      <div className="flex pt-[7px]">
        <svg width="20" height="20" viewBox="0 0 20 20" className="ml-[5px] mt-[13px] shrink-0" fill="none" stroke="#ccc"><path d="M1 1h5v5H1zM7.500 1h5v5h-5zM14 1h5v5h-5zM1 7.500h5v5H1zM14 7.500h5v5h-5zM1 14h5v5H1zM7.500 14h5v5h-5zM14 14h5v5h-5z" /><rect x="7.500" y="7.500" width="5" height="5" fill="#ccc" /></svg>
        <div className="ml-[6px] grid grid-cols-[95px_102px] gap-y-[8px] w-[197px]">
          <TField l="X :" /><div className="ml-[7px]"><TField l="W :" /></div>
          <TField l="Y :" /><div className="ml-[7px]"><TField l="H :" /></div>
        </div>
        <svg width="16" height="16" viewBox="0 0 16 16" className="ml-[9px] mt-[13px]" fill="none" stroke="#ccc"><rect x="5.500" y="1" width="5" height="14" rx="2.500" strokeWidth="1.500" /><path d="M0 4l3 2M0 12l3-2M16 4l-3 2M16 12l-3-2" /></svg>
      </div>
      <div className="flex items-center h-[18px] mt-[8px] text-[12px] text-[#666]">
        <div className="ml-[36px] w-[17px] flex"><svg width="14" height="10" viewBox="0 0 14 10" fill="none" stroke="#6c6c6c"><path d="M1 9L10 1v8z" /></svg></div>
        <div className="flex h-[18px] w-[65px]"><div className="flex-1 bg-[#666] border border-[#333] text-[14px] text-[#848484] leading-[18px] pl-[3px]">0°</div><Drop /></div>
        <div className="ml-[9px] w-[17px] flex"><svg width="14" height="10" viewBox="0 0 14 10" fill="none" stroke="#6c6c6c"><path d="M1 9L5 1h8L9 9z" /></svg></div>
        <div className="flex h-[18px] w-[65px]"><div className="flex-1 bg-[#666] border border-[#333] text-[14px] text-[#848484] leading-[18px] pl-[3px]">0°</div><Drop /></div>
      </div>
      <div className="mx-[6px] mt-[6px] h-px bg-[#5c5c5c]" />
      <div className="flex items-center h-[20px] mt-[4px] ml-[7px] text-[12px] text-[#7a7a7a] whitespace-nowrap">
        <div className="w-[12px] h-[12px] bg-[#5c5c5c] border border-[#444] flex items-center justify-center"><svg width="11" height="10" viewBox="0 0 11 10" fill="none" stroke="#999" strokeWidth="2"><path d="M1 5l3 3 6-7" /></svg></div>
        <span className="ml-[4px]">線幅と効果も拡大・縮小</span>
      </div>
      <div className="flex items-center h-[20px] ml-[7px] text-[12px] text-[#6e6e6e] whitespace-nowrap">
        <div className="w-[12px] h-[12px] bg-[#444] border border-[#555]" />
        <span className="ml-[4px]">ピクセルグリッドに整合</span>
      </div>
    </div>
  </div>
);

const Sel = ({ t }: { t: string }) => (
  <div className="flex h-[19px] ml-[7px] mr-[13px] mb-[7px]"><div className="flex-1 bg-[#9c9c9c] border border-[#2c2c2c] text-[12.500px] text-[#1a1a1a] leading-[18px] pl-[3px] whitespace-nowrap">{t}</div><Drop cls="w-[18px]" /></div>
);
const Num = ({ ic, v }: { ic: React.ReactNode; v: string }) => (
  <div className="flex items-center h-[18px]">
    <div className="w-[22px] shrink-0 flex justify-start">{ic}</div>
    <Spin />
    <div className="w-[58px] h-full bg-[#9c9c9c] text-[14px] tracking-[0.200px] [word-spacing:2px] text-[#1a1a1a] leading-[19px] pl-[4px] whitespace-nowrap overflow-hidden">{v}</div>
    <Drop />
  </div>
);
const ser = "'Liberation Serif',serif";
const lib = "'Liberation Sans',sans-serif";
const TypePanel = () => (
  <div className="h-[162px] shrink-0 flex flex-col">
    <TabBar tabs={[{ label: "文字", w: "w-[41px]", active: true, caret: true }, { label: "段落", w: "w-[35px]" }, { label: "OpenType", w: "w-[69px]", big: true }]} />
    <div className="flex-1 bg-[#484848] flex flex-col pt-[8px]">
      <Sel t="小塚ゴシック Pr6N" />
      <Sel t="R" />
      <div className="mx-[6px] h-px bg-[#5c5c5c] -mt-[1px]" />
      <div className="grid grid-cols-[132px_1fr] gap-y-[8px] pl-[7px] mt-[7px]">
        <Num v="12 pt" ic={<Ico s={19}><text x="6" y="18" textAnchor="middle" fontSize="14" fill="#8a8a8a" stroke="none" fontFamily={ser}>T</text><text x="13" y="17" textAnchor="middle" fontSize="21" fill="#b0b0b0" stroke="none" fontFamily={ser}>T</text></Ico>} />
        <Num v="(21 pt)" ic={<Ico s={19} sw={1}><text x="13" y="9" textAnchor="middle" fontSize="10" fill="#bbb" stroke="none" fontFamily={lib}>A</text><text x="13" y="18" textAnchor="middle" fontSize="10" fill="#bbb" stroke="none" fontFamily={lib}>A</text><path d="M3 7v11M1.500 9L3 7l1.500 2M1.500 16L3 18l1.500-2M8 10h10M8 19h10" /></Ico>} />
        <Num v="100%" ic={<Ico s={19} sw={1}><text x="12" y="17" textAnchor="middle" fontSize="20" fill="#b4b4b4" stroke="none" fontFamily={ser}>T</text><path d="M3 3v14M1 5l2-2 2 2M1 15l2 2 2-2" /></Ico>} />
        <Num v="100%" ic={<Ico s={19} sw={1}><text x="10" y="14" textAnchor="middle" fontSize="18" fill="#b4b4b4" stroke="none" fontFamily={ser}>T</text><path d="M1 17h18M3 15l-2 2 2 2M17 15l2 2-2 2" /></Ico>} />
        <Num v="0" ic={<Ico s={19} sw={1}><text x="9" y="13" textAnchor="middle" fontSize="13" fill="#c0c0c0" stroke="none" fontFamily={lib}>VA</text><path d="M8 17h11M8 17l2-2M8 17l2 2" /></Ico>} />
        <Num v="0" ic={<Ico s={19} sw={1}><rect x="1" y="1" width="18" height="11" fill="#777" stroke="none" /><text x="10" y="12" textAnchor="middle" fontSize="13" fill="#d0d0d0" stroke="none" fontFamily={lib}>VA</text><path d="M1 17h18M3 15l-2 2 2 2M17 15l2 2-2 2" /></Ico>} />
      </div>
    </div>
  </div>
);

const dockSets: React.ReactNode[][] = [
  [<><circle cx="10" cy="10" r="9" stroke="#999" strokeDasharray="2 1.500" /><circle cx="10" cy="10" r="6" fill="#999" stroke="none" /></>, <path d="M2 18V2q14 2 16 16z" fill="#aaa" stroke="#ccc" />],
  [<><path d="M6 10h8v8H6z" fill="#aaa" stroke="none" /><path d="M8 10L4 3M10 10V2M12 10l4-6" strokeWidth="2" /></>, <path d="M10 2a4 4 0 0 1 3.500 6 4 4 0 1 1-2 6.500l1 4.500h-5l1-4.500a4 4 0 1 1-2-6.500A4 4 0 0 1 10 2z" fill="#bbb" stroke="none" />],
  [<><rect x="2" y="10" width="6" height="6" /><rect x="4" y="12" width="6" height="6" /><text x="14" y="11" textAnchor="middle" fontSize="13" fill="#bbb" stroke="none" fontFamily={lib}>A</text></>, <><rect x="2" y="10" width="6" height="6" /><rect x="4" y="12" width="6" height="6" /><text x="14" y="11" textAnchor="middle" fontSize="13" fill="#bbb" stroke="none" fontFamily={lib}>¶</text></>],
  [<text x="10" y="16" textAnchor="middle" fontSize="19" fontStyle="italic" fill="#aaa" stroke="none" fontFamily={ser}>A</text>],
];
const Dock = () => (
  <div className="absolute left-[1136px] top-0 w-[40px] h-[260px] flex flex-col bg-[#484848] border-x border-[#262626]">
    <div className="h-[13px] shrink-0 bg-[#2f2f2f] flex items-center justify-end pr-[5px]">
      <svg width="9" height="6" viewBox="0 0 9 6"><path d="M4 0L0 3l4 3zM9 0L5 3l4 3z" fill="#a0a0a0" /></svg>
    </div>
    {dockSets.map((s, i) => (
      <div key={i} className={`flex flex-col items-center border-b border-[#2c2c2c] shrink-0 ${i === 3 ? "h-[41px]" : "h-[69px]"}`}>
        <div className="h-[10px] shrink-0 flex items-center"><div className="w-[15px] h-[3px] bg-[repeating-linear-gradient(90deg,#bbb_0_1px,transparent_1px_2px)]" /></div>
        {s.map((c, j) => <div key={j} className="h-[28px] shrink-0 flex items-center"><Ico s={20} sw={1.200} c="#b4b4b4">{c}</Ico></div>)}
      </div>
    ))}
  </div>
);

const Panels = () => (
  <div className="absolute left-[1176px] top-0 w-[264px] h-[707px] flex flex-col bg-[#2a2a2a] border-b border-[#2a2a2a]">
    <div className="h-[13px] shrink-0 bg-[#2f2f2f] flex items-center justify-end pr-[5px]">
      <svg width="9" height="6" viewBox="0 0 9 6"><path d="M0 0l4 3-4 3zM5 0l4 3-4 3z" fill="#a0a0a0" /></svg>
    </div>
    <AlignPanel />
    <ColorPanel />
    <TransformPanel />
    <TypePanel />
    <div className="flex-1 mt-[1px] bg-[#484848] flex items-center justify-center"><div className="w-[18px] h-[3px] bg-[repeating-linear-gradient(90deg,#111_0_1px,transparent_1px_2px)]" /></div>
  </div>
);

const Behind = () => (
  <>
    <div className="absolute left-[1274px] top-[771px] w-[166px] h-[35px] bg-[#f7f7f7]" />
    <div className="absolute left-[1274px] top-0 w-[166px] h-[771px] bg-white shadow-[0_6px_14px_rgba(0,0,0,0.55)]" />
    <div className="absolute left-0 top-0 w-[1274px] h-[806px] bg-white rounded-bl-[5px] rounded-br-[5px] shadow-[0_0_6px_rgba(0,0,0,0.3)]" />
    <div className="absolute left-[24px] top-[600px] w-[48px] h-[205px] bg-[linear-gradient(90deg,transparent,rgba(0,0,0,0.06)_45%,rgba(0,0,0,0.42))]" />
    <div className="absolute left-[1136px] top-[260px] w-[13px] h-[491px] bg-[linear-gradient(90deg,#999,#e8e8e8)] border-r border-b border-[#999]" />
    <div className="absolute left-[1136px] top-[751px] w-[34px] h-[55px] bg-[linear-gradient(270deg,transparent,rgba(0,0,0,0.06)_45%,rgba(0,0,0,0.42))]" />
    <div className="absolute left-[1149px] top-[260px] w-[20px] h-[491px] bg-[linear-gradient(90deg,rgba(0,0,0,0.1),transparent)]" />
    <div className="absolute left-[1163px] top-[778px] w-[95px] h-[28px] bg-[#f4f4f4] shadow-[0_0_4px_rgba(0,0,0,0.35)] flex items-center justify-center text-[11px] text-[#333] whitespace-nowrap">ご意見・ご感想</div>
  </>
);

export default function App() {
  return (
    <div className="w-[1440px] h-[900px] overflow-hidden flex flex-col bg-[#1d3a2a] font-['Liberation_Sans','Noto_Sans_CJK_JP',sans-serif]">
      <Menu />
      <AppBar />
      <CtrlBar />
      <div className="relative flex-1">
        <Behind />
        <DocWindow />
        <ToolBox />
        <Dock />
        <Panels />
      </div>
    </div>
  );
}
